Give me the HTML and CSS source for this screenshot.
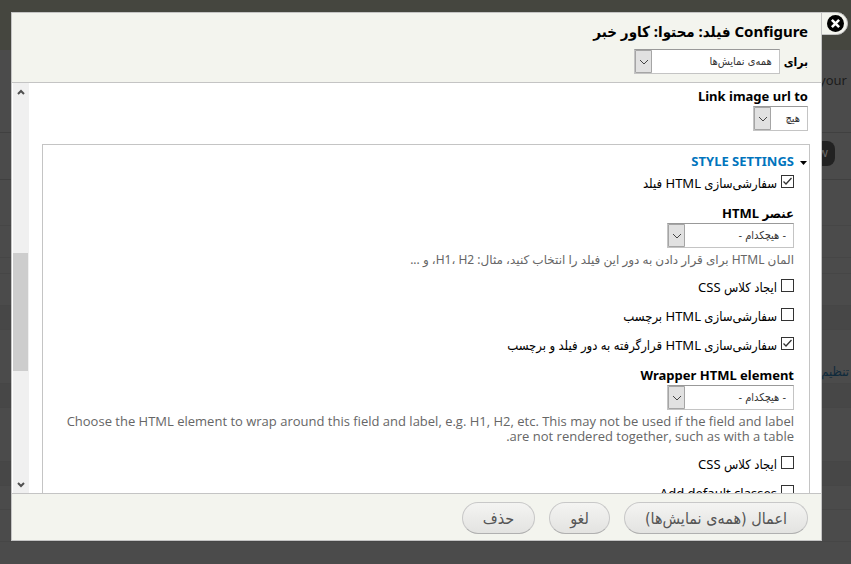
FILE: index.html
```
<!DOCTYPE html>
<html lang="fa" dir="rtl">
<head>
<meta charset="utf-8">
<title>Configure فیلد: محتوا: کاور خبر</title>
<link rel="stylesheet" href="styles.css">
</head>
<body>
<div class="page" aria-hidden="true">
  <div class="page-head"></div>
  <div class="page-intro">your</div>
  <div class="page-actions"><span class="page-button">w</span></div>
  <div class="page-row tall"></div>
  <div class="page-row"></div>
  <div class="page-row slim"></div>
  <div class="page-row"></div>
  <div class="page-row band"></div>
  <div class="page-row mid settings">تنظیم</div>
  <div class="page-row band"></div>
  <div class="page-row mid"></div>
  <div class="page-row band"></div>
  <div class="page-row short"></div>
  <div class="page-row"></div>
</div>

<div class="dialog" role="dialog" aria-labelledby="dialog-title">
  <button class="close" type="button" aria-label="بستن">
    <svg viewBox="0 0 16 16" width="17" height="17"><circle cx="8" cy="8" r="8" fill="#000"/><path d="M4.600 4.600l6.800 6.800M11.400 4.600l-6.800 6.800" stroke="#fff" stroke-width="2.400"/></svg>
  </button>
  <header class="dialog-head">
    <h1 id="dialog-title">Configure فیلد: محتوا: کاور خبر</h1>
    <div class="for-row">
      <label for="display">برای</label>
      <select id="display" class="select w-display"><option>همه‌ی نمایش‌ها</option></select>
    </div>
  </header>

  <div class="dialog-body">
    <form class="form">
      <div class="field">
        <label class="label" for="link">Link image url to</label>
        <select id="link" class="select w-link"><option>هیچ</option></select>
      </div>
      <fieldset class="settings-box">
        <button class="summary" type="button"><svg class="arrow" viewBox="0 0 7 4" width="7" height="4"><path d="M0 0h7L3.500 4z"/></svg>STYLE SETTINGS</button>
        <div class="check first"><input type="checkbox" id="c1" checked><label for="c1">سفارشی‌سازی HTML فیلد</label></div>
        <div class="field">
          <label class="label" for="el">عنصر HTML</label>
          <select id="el" class="select w-element"><option>- هیچکدام -</option></select>
          <p class="description">المان HTML برای قرار دادن به دور این فیلد را انتخاب کنید، مثال: H1، H2، و ...</p>
        </div>
        <div class="check"><input type="checkbox" id="c2"><label for="c2">ایجاد کلاس CSS</label></div>
        <div class="check"><input type="checkbox" id="c3"><label for="c3">سفارشی‌سازی HTML برچسب</label></div>
        <div class="check"><input type="checkbox" id="c4" checked><label for="c4">سفارشی‌سازی HTML قرارگرفته به دور فیلد و برچسب</label></div>
        <div class="field">
          <label class="label" for="wrap">Wrapper HTML element</label>
          <select id="wrap" class="select w-element"><option>- هیچکدام -</option></select>
          <p class="description latin">Choose the HTML element to wrap around this field and label, e.g. H1, H2, etc. This may not be used if the field and label are not rendered together, such as with a table.</p>
        </div>
        <div class="check"><input type="checkbox" id="c5"><label for="c5">ایجاد کلاس CSS</label></div>
        <div class="check"><input type="checkbox" id="c6"><label for="c6">Add default classes</label></div>
      </fieldset>
    </form>
    <div class="scrollbar" aria-hidden="true">
      <svg viewBox="0 0 8 6" width="8" height="6"><path d="M1 5l3-3 3 3"/></svg>
      <div class="track"><div class="thumb"></div></div>
      <svg viewBox="0 0 8 6" width="8" height="6"><path d="M1 1l3 3 3-3"/></svg>
    </div>
  </div>

  <footer class="dialog-foot">
    <button class="button" type="button">اعمال (همه‌ی نمایش‌ها)</button>
    <button class="button" type="button">لغو</button>
    <button class="button" type="button">حذف</button>
  </footer>
</div>
</body>
</html>
```
FILE: styles.css
```
* { box-sizing: border-box; }
html, body { height: 100%; }
body {
  margin: 0;
  overflow: hidden;
  background: #4b4b4b;
  color: #000;
  font: 13px/18px "Noto Sans", "DejaVu Sans Condensed", "DejaVu Sans", sans-serif;
}
h1, p, fieldset { margin: 0; padding: 0; border: 0; }
button, select { font-family: inherit; }

/* Dimmed page underneath */
.page { min-height: 100%; color: #1b1b1b; }
.page-head { height: 50px; background: #45463f; }
.page-intro { height: 83px; padding: 21px 4px; border-bottom: 1px solid #404040; }
.page-actions { height: 47px; padding: 8px 16px; border-bottom: 1px solid #404040; }
.page-button {
  display: block;
  width: 60px;
  height: 25px;
  padding: 2px 7px;
  border-radius: 8px;
  background: #222;
  color: #666;
}
.page-row { height: 32px; border-bottom: 1px solid #464646; }
.page-row.tall { height: 46px; }
.page-row.slim { height: 16px; }
.page-row.short { height: 24px; }
.page-row.band { height: 24px; background: #474747; }
.page-row.mid { height: 54px; }
.page-row.settings { padding: 32px 2px 0; color: #0f2a3c; }

.dialog {
  position: fixed;
  inset: 12px 29px 23px 11px;
  display: flex;
  flex-direction: column;
  border: 1px solid #c4c4c4;
  background: #fff;
}
.close {
  position: absolute;
  top: -1px;
  left: 100%;
  display: flex;
  align-items: center;
  justify-content: center;
  width: 27px;
  height: 23px;
  padding: 0 0 0 2px;
  border: 1px solid #c4c4c4;
  border-radius: 0 12px 12px 0;
  background: #f3f4ee;
}
.dialog-head {
  padding: 7px 13px 8px;
  border-bottom: 1px solid #c4c4c4;
  background: #f3f4ee;
}
h1 { font-size: 15px; line-height: 22px; }
.for-row { display: flex; align-items: center; gap: 4px; margin-top: 7px; font-size: 12px; font-weight: bold; }

.select {
  display: block;
  height: 25px;
  padding: 0 7px;
  border: 1px solid #c4c4c4;
  border-top-color: #999;
  border-radius: 0;
  color: #333;
  font-family: "DejaVu Sans Condensed", "DejaVu Sans", sans-serif;
  font-size: 11px;
  appearance: none;
  background:
    url("data:image/svg+xml,%3Csvg xmlns='http://www.w3.org/2000/svg' width='17' height='23'%3E%3Cpath d='M.5.5h16v22H.5z' fill='%23e1e1e1' stroke='%23a5a5a5'/%3E%3Cpath d='M5 10l4 4 4-4' fill='none' stroke='%23444'/%3E%3C/svg%3E") left center no-repeat #fff;
}
.w-display { width: 146px; }
.w-link { width: 55px; }
.w-element { width: 127px; }

.dialog-body { display: flex; flex: 1; min-height: 0; overflow: hidden; }
.form { flex: 1; min-width: 0; padding: 3px 13px 0; }
.label { display: block; font-weight: bold; line-height: 20px; }
.settings-box {
  margin: 13px -2px 0 0;
  padding: 7px 15px 40px;
  border: 1px solid #c4c4c4;
}
.summary {
  display: flex;
  align-items: center;
  gap: 6px;
  margin-right: -13px;
  padding: 0;
  border: 0;
  background: none;
  color: #0074bd;
  font-size: 13px;
  font-weight: bold;
  line-height: 18px;
}
.arrow { margin-top: 4px; fill: #000; }
.description {
  margin-top: 4px;
  color: #666;
  font-family: "Noto Sans", "DejaVu Sans", sans-serif;
  font-size: 12px;
  line-height: 15px;
}
.description.latin { font-family: "Open Sans", "Noto Sans", sans-serif; font-size: 13px; }
.check { display: flex; align-items: center; gap: 4px; height: 18px; margin: 11px 0; }
.check.first { margin-top: 4px; }
.check input {
  width: 13px;
  height: 13px;
  margin: 0 0 3px;
  border: 1px solid #333;
  border-radius: 0;
  background: #fff;
  appearance: none;
}
.check input:checked {
  background: url("data:image/svg+xml,%3Csvg xmlns='http://www.w3.org/2000/svg' viewBox='0 0 11 11'%3E%3Cpath d='M1.500 5.500l2.500 2.500 5.500-6' fill='none' stroke='%23333' stroke-width='1.300'/%3E%3C/svg%3E") #fff;
}

.scrollbar {
  display: flex;
  flex-direction: column;
  align-items: center;
  width: 17px;
  padding: 6px 0 5px;
  border-left: 1px solid #fff;
  background: #f0f0f0;
}
.scrollbar svg { fill: none; stroke: #505050; stroke-width: 2; }
.track { flex: 1; align-self: stretch; padding: 158px 1px 0 0; }
.thumb { height: 118px; background: #cdcdcd; }

.dialog-foot {
  display: flex;
  gap: 14px;
  padding: 8px 13px 6px;
  border-top: 1px solid #c4c4c4;
  background: #f3f4ee;
}
.button {
  height: 32px;
  padding: 0 20px;
  border: 1px solid #c8c8c8;
  border-bottom-color: #b0b0b0;
  border-radius: 16px;
  background: linear-gradient(#f4f4f2, #e3e3e1);
  color: #555;
  font-family: "DejaVu Sans Condensed", "DejaVu Sans", sans-serif;
  font-size: 16px;
}
```
